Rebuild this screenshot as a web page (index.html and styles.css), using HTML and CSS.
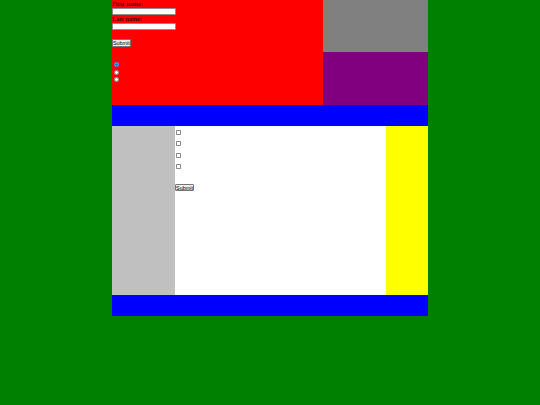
FILE: index.html
```html
<!DOCTYPE html>
<html>
<head>
<meta charset="utf-8">
<link rel="stylesheet" href="styles.css">
</head>
<body>
<div class="page">
  <header class="header">
    <form class="form-area">
      <label class="lbl">First name:</label>
      <input class="txt" type="text">
      <label class="lbl">Last name:</label>
      <input class="txt" type="text">
      <button class="btn btn-top" type="button">Submit</button>
      <div class="radios">
        <input class="radio" type="radio" name="r" checked>
        <input class="radio" type="radio" name="r">
        <input class="radio" type="radio" name="r">
      </div>
    </form>
    <div class="side">
      <div class="side-top"></div>
      <div class="side-bottom"></div>
    </div>
  </header>
  <nav class="nav"></nav>
  <main class="main">
    <aside class="left"></aside>
    <section class="content">
      <div class="checks">
        <input class="check" type="checkbox">
        <input class="check" type="checkbox">
        <input class="check" type="checkbox">
        <input class="check" type="checkbox">
      </div>
      <button class="btn btn-content" type="button">Submit</button>
    </section>
    <aside class="right"></aside>
  </main>
  <footer class="footer"></footer>
</div>
</body>
</html>
```

FILE: styles.css
```css
html, body {
  margin: 0;
  padding: 0;
  background: #008000;
}
body {
  font-family: "Liberation Serif", "Times New Roman", serif;
  font-size: 6.8px;
  color: #000;
}
.page {
  width: 316px;
  margin: 0 auto;
}
.header {
  display: flex;
  height: 105px;
}
.form-area {
  width: 211px;
  background: #ff0000;
  display: flex;
  flex-direction: column;
  align-items: flex-start;
  margin: 0;
}
.lbl {
  display: block;
  height: 7.6px;
  line-height: 7.6px;
}
.txt {
  box-sizing: border-box;
  width: 64px;
  height: 7.6px;
  margin: 0;
  padding: 0;
  border: 0.8px solid #8f8f8f;
  border-radius: 1px;
  background: #fff;
}
.btn {
  box-sizing: border-box;
  height: 7.6px;
  padding: 0;
  margin: 0;
  border: 0.6px solid #767676;
  border-radius: 1px;
  background: #efefef;
  font-family: "Liberation Sans", Arial, sans-serif;
  font-size: 5.4px;
  line-height: 6px;
  color: #000;
  text-align: center;
}
.btn-top {
  margin-top: 8.6px;
  width: 18.5px;
}
.radios {
  display: flex;
  flex-direction: column;
  margin-top: 15.8px;
  gap: 2.3px;
}
.radio {
  width: 5px;
  height: 5px;
  margin: 0 0 0 2px;
  padding: 0;
  accent-color: #1a73e8;
}
.side {
  width: 105px;
  display: flex;
  flex-direction: column;
}
.side-top {
  height: 52px;
  background: #808080;
}
.side-bottom {
  flex: 1;
  background: #800080;
}
.nav {
  height: 21px;
  background: #0000ff;
}
.main {
  display: flex;
  height: 169px;
}
.left {
  width: 63px;
  background: #c0c0c0;
}
.content {
  width: 211px;
  background: #fff;
  display: flex;
  flex-direction: column;
  align-items: flex-start;
}
.checks {
  display: flex;
  flex-direction: column;
  gap: 6.3px;
  margin-top: 4.2px;
}
.check {
  appearance: none;
  -webkit-appearance: none;
  box-sizing: border-box;
  width: 5px;
  height: 5px;
  margin: 0 0 0 0.6px;
  padding: 0;
  border: 0.6px solid #8a8a8a;
  border-radius: 0.8px;
  background: #fff;
}
.btn-content {
  margin-top: 14.5px;
  width: 19px;
}
.right {
  width: 42px;
  background: #ffff00;
}
.footer {
  height: 21px;
  background: #0000ff;
}
```
